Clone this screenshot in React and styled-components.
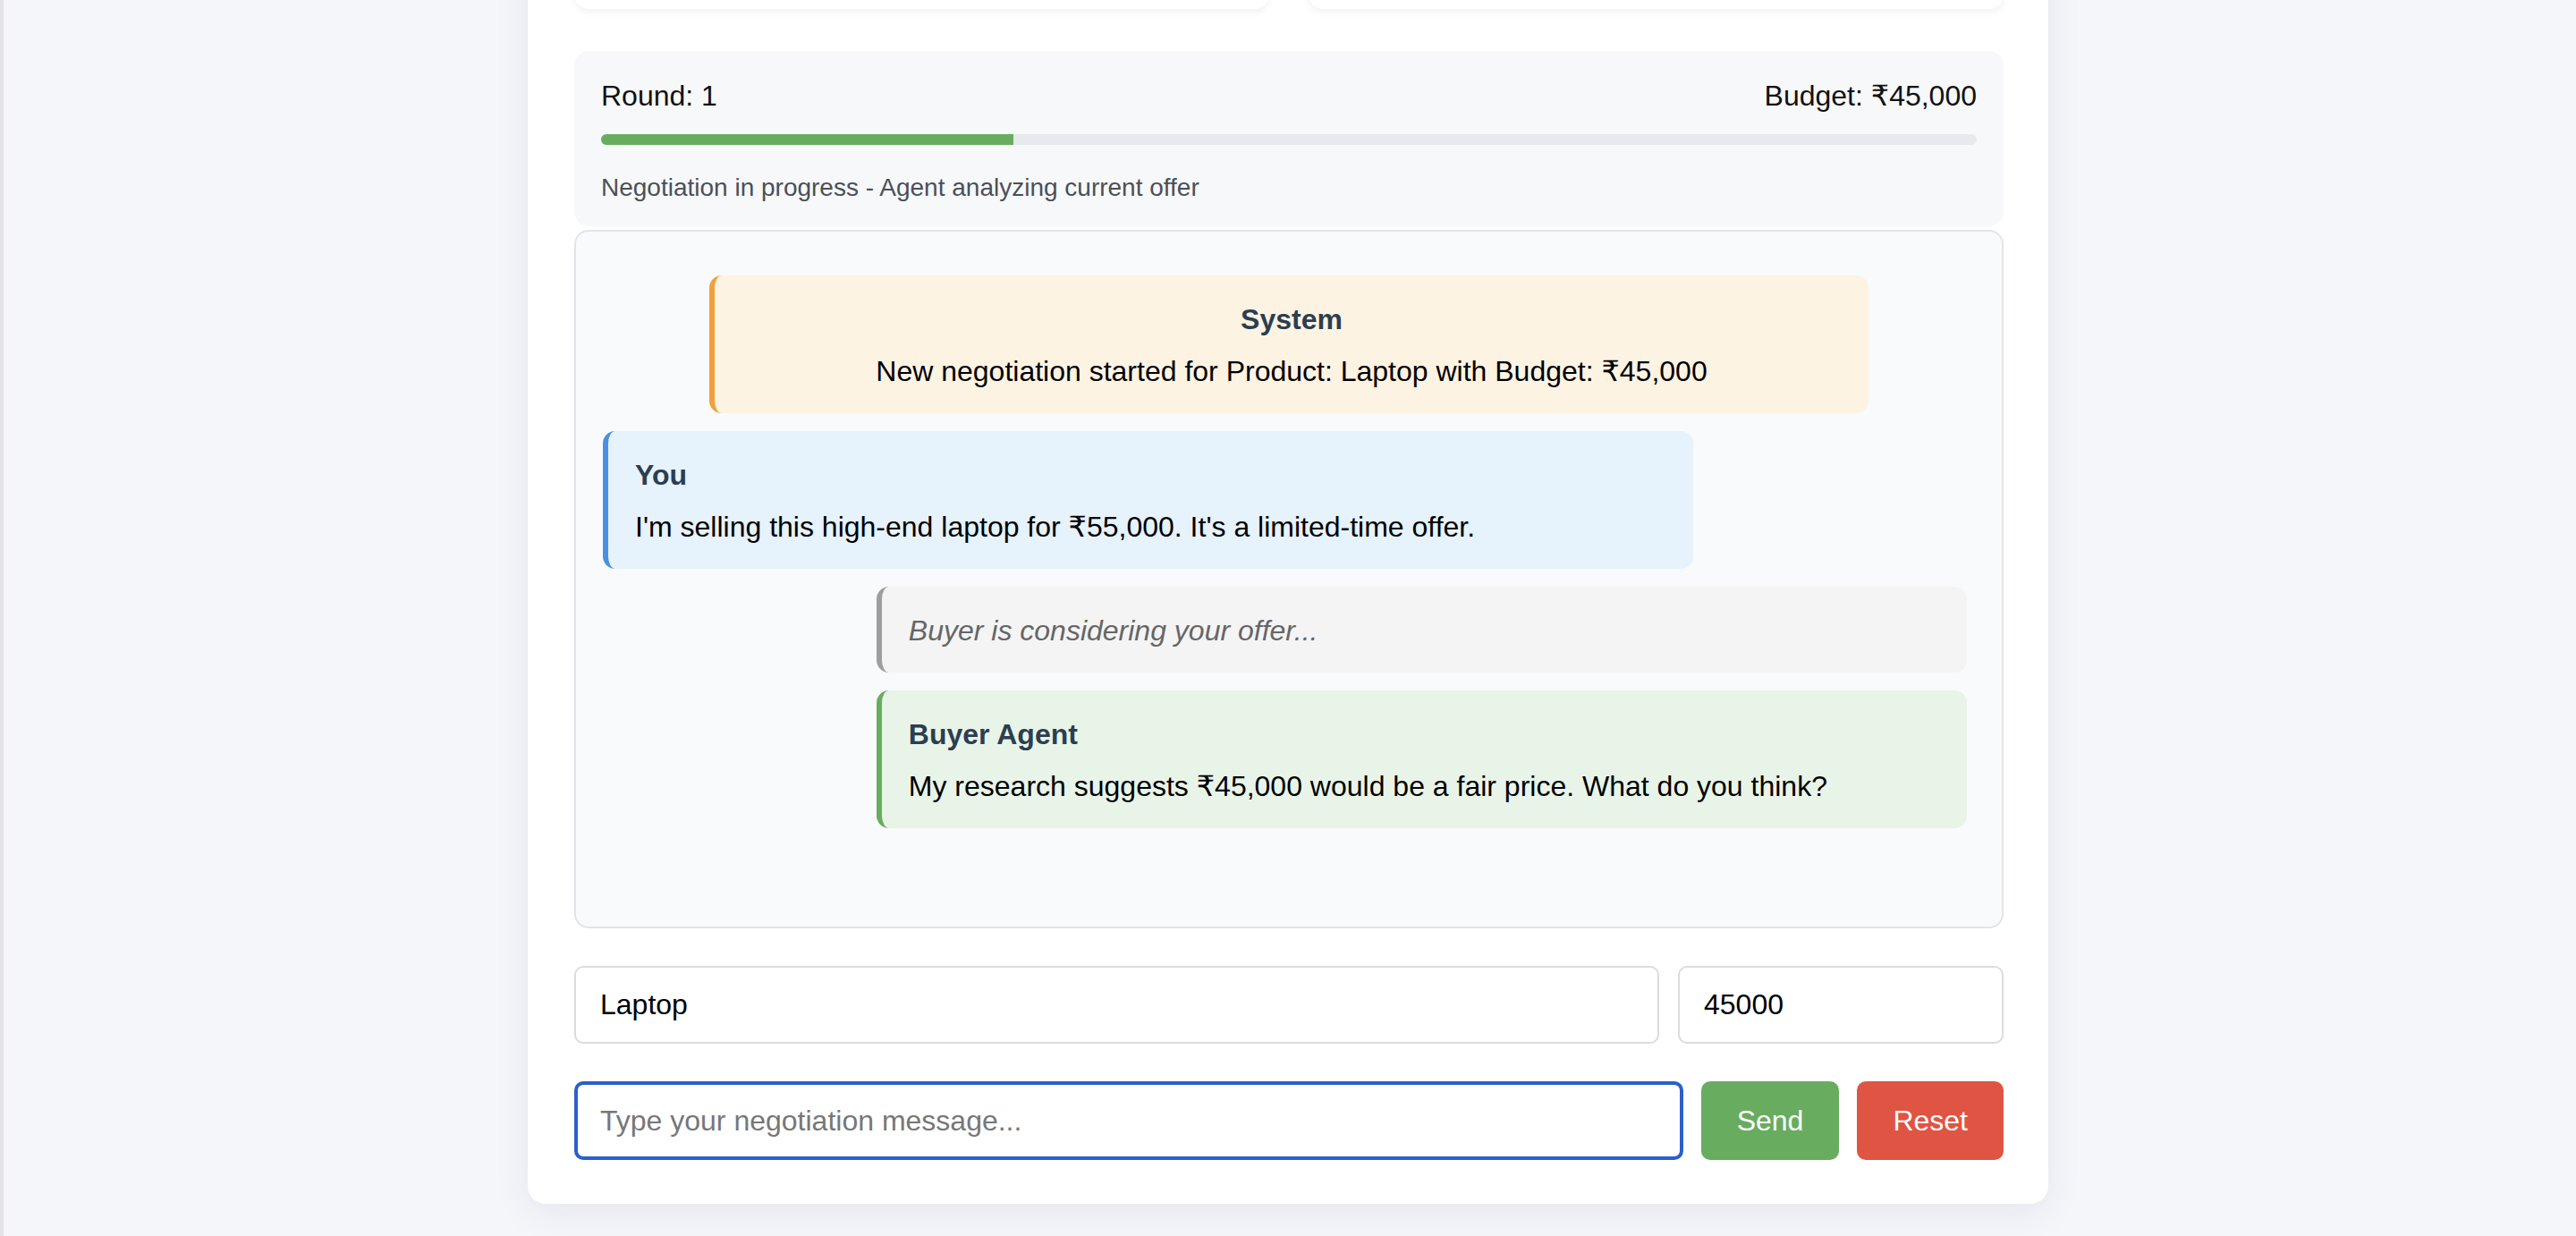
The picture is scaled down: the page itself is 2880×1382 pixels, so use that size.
import React from "react";
import styled, { createGlobalStyle } from "styled-components";

// ─────────────────────────────────────────────────────────────────────────────
// Global
// ─────────────────────────────────────────────────────────────────────────────

const GlobalStyle = createGlobalStyle`
  * { box-sizing: border-box; }
  html, body {
    margin: 0;
    padding: 0;
    background: #f5f6fa;
  }
  body {
    font-family: "Liberation Sans", "DejaVu Sans", Arial, sans-serif;
    overflow: hidden;
  }
`;

// ─────────────────────────────────────────────────────────────────────────────
// Styled Components
// ─────────────────────────────────────────────────────────────────────────────

const Page = styled.div`
  min-height: 1382px;
  background: #f5f6fa;
  box-shadow: inset 4px 0 0 #e4e4e8;
  overflow: hidden;
`;

// page is shown scrolled down, so the card starts above the viewport
const Card = styled.main`
  width: 1700px;
  margin: -220px auto 0;
  padding: 50px 50px 49px 52px;
  background: #fff;
  border-radius: 20px;
  box-shadow: 0 10px 40px rgba(40, 50, 90, 0.08);
`;

const StatsGrid = styled.div`
  display: grid;
  grid-template-columns: 1fr 1fr;
  gap: 44px;
  height: 180px;
`;

const StatCard = styled.div`
  background: #fff;
  border-radius: 16px;
  box-shadow: 0 3px 10px rgba(0, 0, 0, 0.06);
`;

// ── Status panel ─────────────────────────────────────────────────────────────

const StatusPanel = styled.section`
  margin-top: 47px;
  padding: 30px 30px 26px;
  background: #f7f8fa;
  border-radius: 16px;
`;

const StatusRow = styled.div`
  display: flex;
  justify-content: space-between;
  font-size: 32px;
  line-height: 40px;
  color: #111;
`;

const Track = styled.div`
  margin-top: 23px;
  height: 12px;
  background: #e8e9ed;
  border-radius: 6px;
  overflow: hidden;
`;

const Fill = styled.div`
  height: 100%;
  background: #68ad5f;
`;

const StatusNote = styled.p`
  margin: 31px 0 0;
  font-size: 28px;
  line-height: 34px;
  color: #4a5058;
`;

// ── Chat ─────────────────────────────────────────────────────────────────────

const ChatBox = styled.section`
  margin-top: 4px;
  height: 781px;
  padding: 49px 30px 30px;
  display: flex;
  flex-direction: column;
  gap: 20px;
  background: #f9fafb;
  border: 2px solid #e3e4e8;
  border-radius: 16px;
  overflow: hidden;
`;

const variants = {
  system: { bg: "#fdf3e3", accent: "#f2a03c", align: "center", width: "calc(85% - 8px)" },
  user: { bg: "#e6f2fc", accent: "#4a90e2", align: "flex-start", width: "calc(80% - 8px)" },
  thinking: { bg: "#f4f4f4", accent: "#9e9e9e", align: "flex-end", width: "calc(80% - 8px)" },
  agent: { bg: "#e8f4e8", accent: "#68ad5f", align: "flex-end", width: "calc(80% - 8px)" },
};

const Bubble = styled.div`
  align-self: ${({ $kind }) => variants[$kind].align};
  width: ${({ $kind }) => variants[$kind].width};
  margin-right: ${({ $kind }) => ($kind === "agent" || $kind === "thinking" ? "9px" : "0")};
  padding: 30px 30px 28px;
  background: ${({ $kind }) => variants[$kind].bg};
  border-left: 6px solid ${({ $kind }) => variants[$kind].accent};
  border-radius: 14px;
  font-size: 32px;
  line-height: 38px;
  color: ${({ $kind }) => ($kind === "thinking" ? "#666" : "#000")};
  font-style: ${({ $kind }) => ($kind === "thinking" ? "italic" : "normal")};
  text-align: ${({ $kind }) => ($kind === "system" ? "center" : "left")};
`;

const Sender = styled.div`
  margin-bottom: 20px;
  font-weight: 700;
  color: #2c3e50;
`;

// ── Inputs ───────────────────────────────────────────────────────────────────

const FieldRow = styled.div`
  display: flex;
  gap: ${({ $gap }) => $gap}px;
  margin-top: 42px;
`;

const TextField = styled.input`
  flex: ${({ $width }) => ($width ? "none" : "1")};
  width: ${({ $width }) => ($width ? `${$width}px` : "auto")};
  min-width: 0;
  height: ${({ $height }) => $height}px;
  padding: 0 ${({ $focused }) => ($focused ? 25 : 27)}px;
  border: ${({ $focused }) => ($focused ? "4px solid #2b5fcc" : "2px solid #dcdcdc")};
  border-radius: 10px;
  background: #fff;
  font-family: "Liberation Sans", Arial, sans-serif;
  font-size: 32px;
  color: #000;
  outline: none;

  &::placeholder { color: #777; }
`;

const ActionButton = styled.button`
  flex: none;
  height: 88px;
  padding: 0 40px;
  border: none;
  border-radius: 10px;
  background: ${({ $tone }) => ($tone === "danger" ? "#e05444" : "#68ad5f")};
  color: #fff;
  font-family: "Liberation Sans", Arial, sans-serif;
  font-size: 32px;
  cursor: pointer;
`;

// ─────────────────────────────────────────────────────────────────────────────
// Component
// ─────────────────────────────────────────────────────────────────────────────

const messages = [
  { kind: "system", sender: "System", text: "New negotiation started for Product: Laptop with Budget: ₹45,000" },
  { kind: "user", sender: "You", text: "I'm selling this high-end laptop for ₹55,000. It's a limited-time offer." },
  { kind: "thinking", text: "Buyer is considering your offer..." },
  { kind: "agent", sender: "Buyer Agent", text: "My research suggests ₹45,000 would be a fair price. What do you think?" },
];

const App = () => {
  const round = 1;
  const progress = 30;

  return (
    <>
      <GlobalStyle />
      <Page>
        <Card>
          <StatsGrid>
            <StatCard />
            <StatCard />
          </StatsGrid>

          {/* ── Status ── */}
          <StatusPanel>
            <StatusRow>
              <span>Round: {round}</span>
              <span>Budget: ₹45,000</span>
            </StatusRow>
            <Track>
              <Fill style={{ width: `${progress}%` }} />
            </Track>
            <StatusNote>Negotiation in progress - Agent analyzing current offer</StatusNote>
          </StatusPanel>

          {/* ── Chat ── */}
          <ChatBox>
            {messages.map((m, i) => (
              <Bubble key={i} $kind={m.kind}>
                {m.sender && <Sender>{m.sender}</Sender>}
                <div>{m.text}</div>
              </Bubble>
            ))}
          </ChatBox>

          {/* ── Product + budget ── */}
          <FieldRow $gap={21}>
            <TextField $height={87} defaultValue="Laptop" />
            <TextField $height={87} $width={364} type="number" defaultValue="45000" />
          </FieldRow>

          {/* ── Message + actions ── */}
          <FieldRow $gap={20}>
            <TextField $height={88} $focused placeholder="Type your negotiation message..." />
            <ActionButton>Send</ActionButton>
            <ActionButton $tone="danger">Reset</ActionButton>
          </FieldRow>
        </Card>
      </Page>
    </>
  );
};

export default App;
